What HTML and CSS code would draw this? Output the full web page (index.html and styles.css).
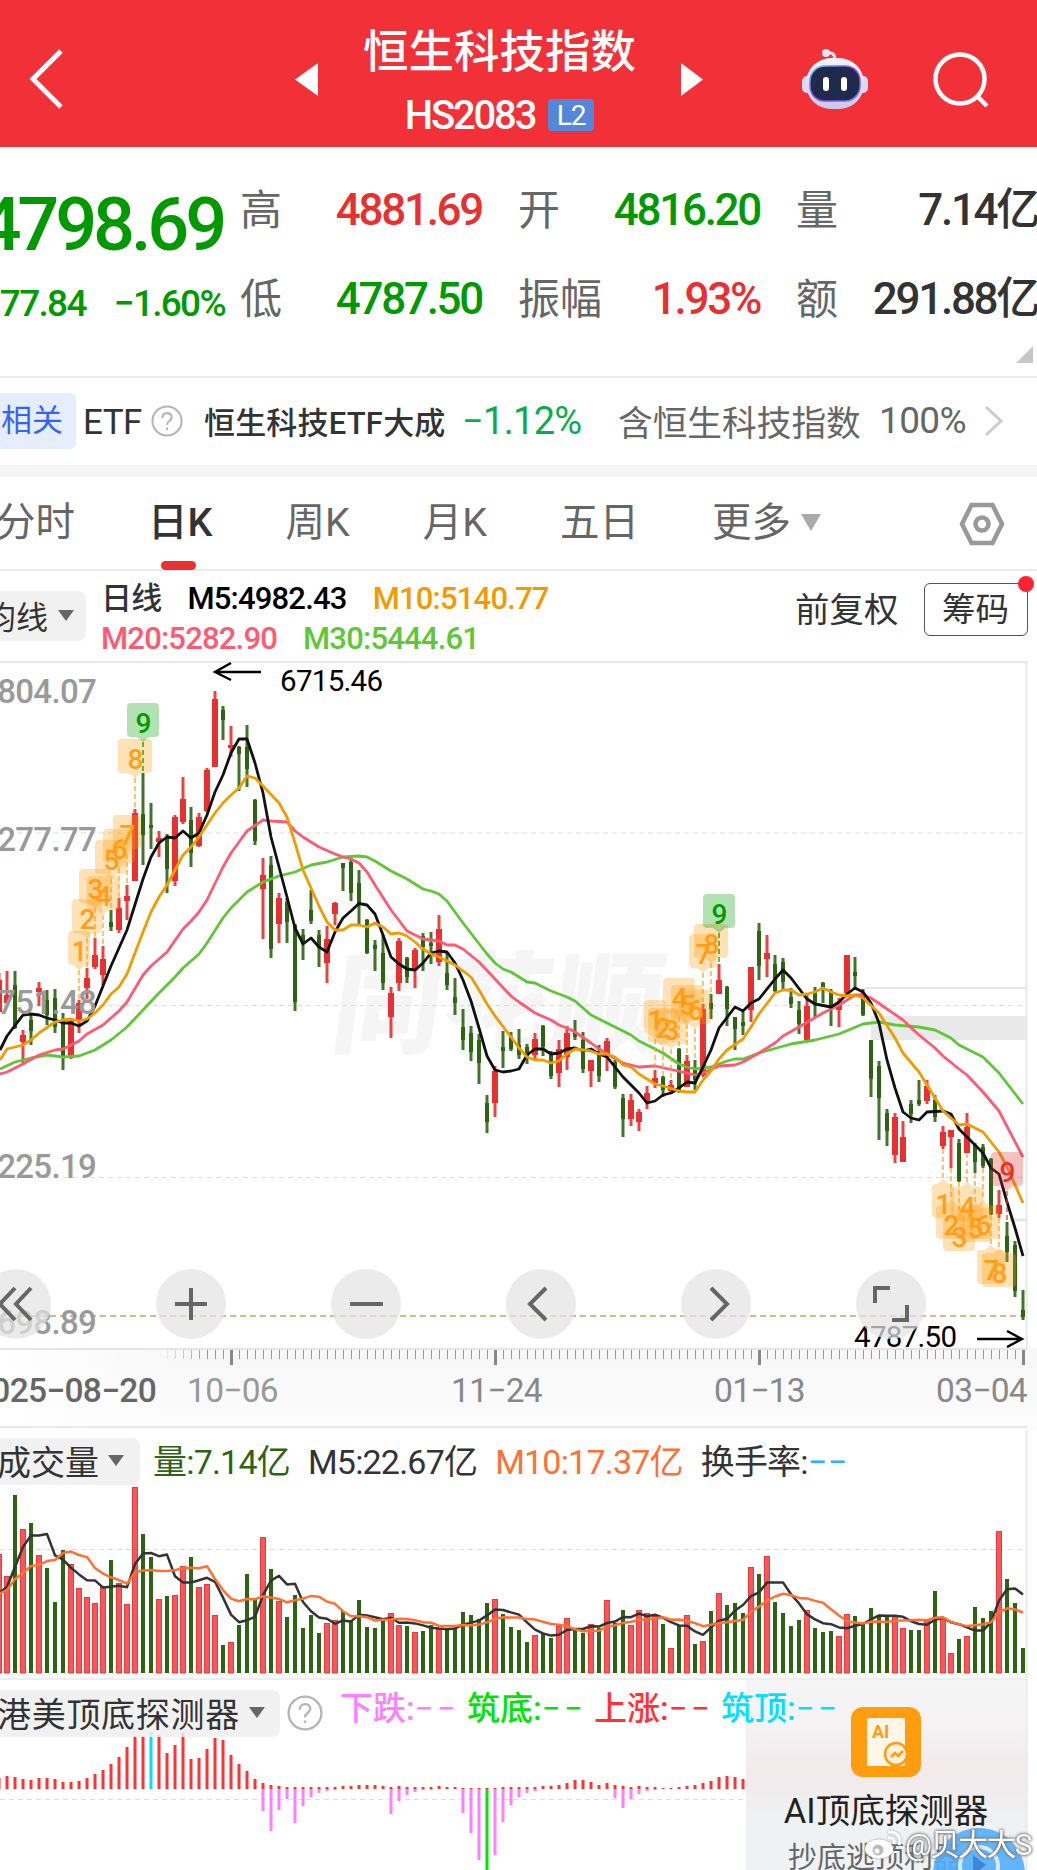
FILE: index.html
```html
<!DOCTYPE html>
<html lang="zh-CN">
<head>
    <meta charset="UTF-8">
    <title>恒生科技指数 HS2083</title>
    <link rel="stylesheet" href="styles.css">
</head>
<body>
    <header class="header">
        <svg class="back" width="36" height="62" viewBox="0 0 36 62"><path d="M33 3 5 31 33 59"/></svg>
        <svg class="prev" width="23" height="33" viewBox="0 0 23 33"><path d="M23 0v33L0 16.500z"/></svg>
        <div class="title">
            <h1>恒生科技指数</h1>
            <div class="code"><span>HS2083</span><span class="level">L2</span></div>
        </div>
        <svg class="next" width="22" height="33" viewBox="0 0 22 33"><path d="M0 0v33L22 16.500z"/></svg>
        <svg class="robot" width="66" height="62" viewBox="0 0 66 62">
            <defs>
                <linearGradient id="face" x1="0" y1="0" x2="1" y2="1">
                    <stop offset="0" stop-color="#5fd0e8"/><stop offset=".5" stop-color="#8a3be0"/><stop offset="1" stop-color="#6a7cf0"/>
                </linearGradient>
                <linearGradient id="shell" x1="0" y1="0" x2="0" y2="1">
                    <stop offset="0" stop-color="#f4f3fd"/><stop offset="1" stop-color="#c9c8ea"/>
                </linearGradient>
            </defs>
            <path d="M24 6q9-2 9 7" fill="none" stroke="#e6e4f8" stroke-width="3"/>
            <circle cx="24" cy="6" r="4" fill="#e6e4f8"/>
            <rect x="0" y="29" width="10" height="17" rx="5" fill="#dcdaf3"/>
            <rect x="56" y="29" width="10" height="17" rx="5" fill="#dcdaf3"/>
            <rect x="4" y="11" width="58" height="51" rx="25" fill="url(#shell)"/>
            <rect x="8" y="19" width="50" height="35" rx="15" fill="#1f2a4d" stroke="url(#face)" stroke-width="1.500"/>
            <rect x="21" y="30" width="6" height="14" rx="3" fill="#fff"/>
            <rect x="39" y="30" width="6" height="14" rx="3" fill="#fff"/>
        </svg>
        <svg class="search" width="56" height="56" viewBox="0 0 56 56"><circle cx="27" cy="27" r="24.500"/><path d="M44 44 54 54"/></svg>
    </header>

    <section class="quote">
        <div class="last">
            <div class="price">4798.69</div>
            <div class="change"><span>−77.84</span><span>−1.60%</span></div>
        </div>
        <dl class="stats">
            <div><dt>高</dt><dd class="up">4881.69</dd></div>
            <div><dt>开</dt><dd class="down">4816.20</dd></div>
            <div><dt>量</dt><dd>7.14亿</dd></div>
            <div><dt>低</dt><dd class="down">4787.50</dd></div>
            <div><dt>振幅</dt><dd class="up">1.93%</dd></div>
            <div><dt>额</dt><dd>291.88亿</dd></div>
        </dl>
        <i class="corner"></i>
    </section>

    <section class="related">
        <span class="tag">相关</span>
        <span class="etf">ETF</span>
        <svg class="help" width="32" height="32" viewBox="0 0 34 34"><circle cx="17" cy="17" r="15.500"/><path d="M12 14c0-7 10-7 10-1 0 4-5 4-5 8M17 24v2.500"/></svg>
        <span class="etf-name">恒生科技ETF大成</span>
        <span class="etf-change">−1.12%</span>
        <span class="etf-hold">含恒生科技指数</span>
        <span class="etf-pct">100%</span>
        <svg class="more" width="20" height="32" viewBox="0 0 20 32"><path d="M2 2 17 16 2 30"/></svg>
    </section>

    <nav class="tabs">
        <span>分时</span>
        <span class="active">日K</span>
        <span>周K</span>
        <span>月K</span>
        <span>五日</span>
        <span>更多<i class="caret"></i></span>
        <svg class="setting" width="46" height="44" viewBox="0 0 46 44"><path d="M12.500 3h21L43 22l-9.500 19h-21L3 22z"/><circle cx="23" cy="22" r="6.500"/></svg>
    </nav>

    <section class="ma">
        <span class="pill ma-pill">均线<i class="caret"></i></span>
        <div class="ma-values">
            <p><span>日线</span><span class="m5">M5:4982.43</span><span class="m10">M10:5140.77</span></p>
            <p><span class="m20">M20:5282.90</span><span class="m30">M30:5444.61</span></p>
        </div>
        <span class="adjust">前复权</span>
        <span class="chips">筹码</span>
    </section>

    <section class="kline">
        <svg id="kline" width="1037" height="688" viewBox="0 0 1037 688"></svg>
        <div class="controls">
            <span><svg viewBox="0 0 70 70"><path d="M34 19 19 35 34 51M50 19 35 35 50 51"/></svg></span>
            <span><svg viewBox="0 0 70 70"><path d="M35 19v32M19 35h32"/></svg></span>
            <span><svg viewBox="0 0 70 70"><path d="M19 35h33"/></svg></span>
            <span><svg viewBox="0 0 70 70"><path d="M40 19 24 35 40 51"/></svg></span>
            <span><svg viewBox="0 0 70 70"><path d="M30 19 46 35 30 51"/></svg></span>
            <span><svg viewBox="0 0 70 70"><path d="M19 34V19h15M51 36v15H36"/></svg></span>
        </div>
    </section>

    <section class="axis">
        <svg id="axis" width="1037" height="82" viewBox="0 0 1037 82"></svg>
    </section>

    <section class="volume">
        <svg id="volume" width="1037" height="250" viewBox="0 0 1037 250"></svg>
        <div class="sub-head">
            <span class="pill">成交量<i class="caret"></i></span>
            <div class="vol-values">
                <span class="vol">量:7.14亿</span>
                <span>M5:22.67亿</span>
                <span class="vol-m10">M10:17.37亿</span>
                <span>换手率:<b>−−</b></span>
            </div>
        </div>
    </section>

    <section class="probe">
        <svg id="probe" width="1037" height="190" viewBox="0 0 1037 190"></svg>
        <div class="ai-card">
            <svg width="70" height="70" viewBox="0 0 70 70">
                <rect width="70" height="70" rx="12" fill="#ff9d0e"/>
                <rect x="16" y="11" width="38" height="48" rx="2" fill="#fff6ea"/>
                <text x="21" y="31" font-size="18" font-weight="700" fill="#ff9d0e">AI</text>
                <circle cx="45" cy="47" r="11" fill="#fff1df" stroke="#ff9d0e" stroke-width="2.500"/>
                <path d="M40 50l4-4 3 3 5-5" fill="none" stroke="#ff9d0e" stroke-width="2.500"/>
            </svg>
            <h2>AI顶底探测器</h2>
            <p>抄底逃顶利器</p>
        </div>
        <div class="sub-head">
            <span class="pill probe-pill">港美顶底探测器<i class="caret"></i></span>
            <svg class="help" width="36" height="36" viewBox="0 0 34 34"><circle cx="17" cy="17" r="15.500"/><path d="M12 14c0-7 10-7 10-1 0 4-5 4-5 8M17 24v2.500"/></svg>
            <div class="legend">
                <span class="fall">下跌:<b>−−</b></span>
                <span class="bottom">筑底:<b>−−</b></span>
                <span class="rise">上涨:<b>−−</b></span>
                <span class="top">筑顶:<b>−−</b></span>
            </div>
        </div>
        <div class="float-ball"><svg viewBox="0 0 92 92"><circle cx="46" cy="38" r="19"/><path d="M40 27v20l13-10z"/></svg></div>
        <div class="mark">
            <svg width="38" height="30" viewBox="0 0 38 30"><ellipse cx="15" cy="19" rx="14" ry="9.500"/><circle cx="14" cy="20" r="5.500" fill="#bbb"/><circle cx="13" cy="21" r="2.500"/><path class="wave" d="M24 8c5-1 7 2 6 6M24 2c9-1 14 6 11 13"/></svg>
            <span>@贝大大S</span>
        </div>
    </section>

    <script src="chart.js"></script>
</body>
</html>
```
FILE: styles.css
```css
* {
    box-sizing: border-box;
}
body {
    margin: 0;
    width: 1037px;
    height: 1870px;
    overflow: hidden;
    background: #fff;
    color: #333;
    font-family: Roboto, "Noto Sans CJK SC", sans-serif;
}
h1, h2, p, dl, dd {
    margin: 0;
    font-weight: 400;
}
span, dt, dd, h1, h2, p {
    white-space: nowrap;
}
svg {
    display: block;
    flex: none;
}

/* header */
.header {
    display: flex;
    align-items: center;
    height: 147px;
    padding-top: 12px;
    background: #f23038;
    color: #fff;
}
.back {
    margin-left: 28px;
    margin-top: -2px;
    fill: none;
    stroke: #fff;
    stroke-width: 5;
}
.prev, .next {
    fill: #fff;
}
.prev {
    margin-left: 231px;
}
.title {
    width: 363px;
    align-self: flex-start;
    margin-top: 11px;
    text-align: center;
}
.title h1 {
    font-size: 45.500px;
    line-height: 60px;
    font-weight: 500;
}
.code {
    display: flex;
    justify-content: center;
    align-items: center;
    gap: 13px;
    height: 40px;
    margin-top: 12px;
    font-size: 40px;
    font-weight: 500;
    letter-spacing: -2.200px;
}
.level {
    width: 46px;
    height: 32px;
    border-radius: 4px;
    background: #5487da;
    font-size: 28px;
    font-weight: 400;
    line-height: 33px;
    letter-spacing: -1px;
}
.robot {
    margin-left: 99px;
    margin-top: -4px;
}
.search {
    margin-left: 65px;
    fill: none;
    stroke: #fff;
    stroke-width: 4.500;
}

/* quote */
.quote {
    position: relative;
    display: flex;
    height: 231px;
    border-bottom: 2px solid #ebebeb;
}
.last {
    width: 225px;
    margin-right: 15px;
    display: flex;
    flex-direction: column;
    align-items: flex-end;
    padding-top: 36px;
    color: #009a00;
}
.price {
    font-size: 74px;
    line-height: 84px;
    font-weight: 500;
    letter-spacing: -4.200px;
    margin-right: 2px;
}
.change {
    display: flex;
    gap: 28px;
    margin-top: 17px;
    font-size: 37px;
    line-height: 40px;
    font-weight: 500;
    letter-spacing: -1.700px;
    margin-right: 0;
}
.stats {
    width: 797px;
    display: grid;
    grid-template-columns: repeat(3, 1fr);
    column-gap: 37px;
    align-content: start;
    padding-top: 28px;
}
.stats div {
    display: flex;
    justify-content: space-between;
    align-items: baseline;
    height: 89px;
    line-height: 70px;
}
.stats dt {
    font-size: 42px;
    color: #666;
}
.stats dd {
    font-size: 44px;
    font-weight: 500;
    letter-spacing: -2.300px;
    margin-right: -1px;
}
.stats .up {
    color: #e7302f;
}
.stats .down {
    color: #009a00;
}
.corner {
    position: absolute;
    right: 4px;
    bottom: 13px;
    border-left: 17px solid transparent;
    border-bottom: 17px solid #c6c6c6;
}

/* related ETF */
.related {
    display: flex;
    align-items: center;
    height: 99px;
    padding-bottom: 2px;
    border-bottom: 12px solid #f4f4f4;
}
.tag {
    width: 76px;
    height: 56px;
    padding-left: 1px;
    border-radius: 0 6px 6px 0;
    background: #e6edff;
    color: #3564f5;
    font-size: 31px;
    line-height: 56px;
}
.etf {
    margin-left: 7px;
    padding-top: 3px;
    font-size: 35px;
    letter-spacing: -.5px;
}
.help {
    fill: none;
    stroke: #b5b5b5;
    stroke-width: 2.200;
}
.related .help {
    margin-left: 9px;
}
.etf-name {
    width: 240px;
    margin-left: 21px;
    font-size: 31px;
    letter-spacing: .2px;
    font-weight: 500;
}
.etf-change {
    width: 121px;
    margin-left: 18px;
    font-size: 38px;
    letter-spacing: -.7px;
    color: #0aab50;
}
.etf-hold {
    width: 244px;
    margin-left: 35px;
    font-size: 34.700px;
    color: #666;
}
.etf-pct {
    margin-left: 17px;
    font-size: 37px;
    letter-spacing: -.6px;
    color: #666;
}
.more {
    margin-left: 18px;
    fill: none;
    stroke: #ccc;
    stroke-width: 3;
}

/* tabs */
.tabs {
    position: relative;
    display: flex;
    align-items: center;
    gap: 73px;
    height: 94px;
    margin-left: -4px;
    border-bottom: 2px solid #ebebeb;
    font-size: 39.500px;
    color: #666;
}
.tabs span {
    position: relative;
    line-height: 96px;
}
.tabs .active {
    color: #333;
    font-weight: 500;
}
.tabs .active::after {
    content: "";
    position: absolute;
    left: 13px;
    bottom: 1px;
    width: 35px;
    height: 9px;
    border-radius: 5px;
    background: #e7302f;
}
.caret {
    display: inline-block;
    border: 8px solid transparent;
    border-top: 11px solid #666;
    border-bottom: 0;
}
.tabs .caret {
    margin-left: 10px;
    vertical-align: 5px;
    border-width: 17px 10.500px 0;
    border-top-color: #aaa;
}
.setting {
    margin-left: auto;
    margin-right: 32px;
    margin-top: 2px;
    fill: none;
    stroke: #999;
    stroke-width: 4.500;
}

/* moving averages */
.ma {
    display: flex;
    height: 89px;
}
.pill {
    display: flex;
    align-items: center;
    height: 47px;
    padding-bottom: 2px;
    border-radius: 0 8px 8px 0;
    background: #f1f1f1;
    font-size: 34px;
}
.ma-pill {
    width: 86px;
    height: 50px;
    margin-top: 20px;
    font-size: 32px;
    text-indent: -16px;
}
.ma-pill .caret {
    margin-left: 10px;
}
.ma-values {
    width: 694px;
    margin-left: 15px;
    padding-top: 8px;
    font-size: 31px;
    font-weight: 500;
    letter-spacing: -.8px;
}
.ma-values p {
    display: flex;
    gap: 26px;
    line-height: 39.500px;
    height: 39.500px;
    font-weight: inherit;
}
.m5 {
    color: #000;
}
.m10 {
    color: #f09c00;
}
.m20 {
    color: #ff5a74;
}
.m30 {
    color: #5fc736;
}
.adjust {
    margin-top: 14px;
    font-size: 34.500px;
    line-height: 50px;
}
.chips {
    position: relative;
    width: 104px;
    height: 53px;
    margin-left: 25px;
    margin-top: 12px;
    border: 1.500px solid #555;
    border-radius: 6px;
    text-align: center;
    font-size: 33.500px;
    line-height: 52px;
}
.chips::after {
    content: "";
    position: absolute;
    right: -7px;
    top: -8px;
    width: 16px;
    height: 16px;
    border-radius: 50%;
    background: #ff2233;
}

/* charts */
.kline {
    position: relative;
    height: 688px;
}
.kline text, .axis text {
    letter-spacing: -.7px;
}
.controls {
    position: absolute;
    left: -19px;
    top: 609px;
    display: flex;
    gap: 105px;
}
.controls span {
    width: 70px;
    height: 70px;
    border-radius: 50%;
    background: rgba(227, 227, 227, .72);
}
.controls path {
    fill: none;
    stroke: #666;
    stroke-width: 4;
}
.axis {
    height: 82px;
    background: linear-gradient(90deg, #fff 0, rgba(255, 255, 255, 0) 180px), linear-gradient(#f7f7f7, #fcfcfc);
}
.volume, .probe {
    position: relative;
}
.volume {
    height: 250px;
}
.probe {
    height: 190px;
}
#volume, #probe {
    position: absolute;
    left: 0;
    top: 0;
}
.sub-head {
    position: relative;
    display: flex;
    font-size: 33px;
}
.volume .sub-head {
    padding-top: 8px;
}
.volume .pill {
    width: 140px;
    text-indent: -3px;
}
.volume .caret {
    margin-left: 9px;
}
.vol-values {
    display: flex;
    gap: 18px;
    margin-left: 13px;
    line-height: 48px;
    font-size: 34px;
    letter-spacing: -.8px;
}
.vol-values b {
    font-weight: 400;
    color: #2fb0ff;
    letter-spacing: .5px;
}
.vol {
    color: #2c6412;
}
.vol-m10 {
    color: #ff7033;
}
.probe .sub-head {
    padding-top: 10px;
}
.probe-pill {
    width: 280px;
    letter-spacing: .7px;
    text-indent: -3px;
    background: rgba(238, 238, 238, .85);
}
.probe-pill .caret {
    margin-left: 9px;
}
.probe .help {
    margin: 5px 0 0 7px;
}
.legend {
    display: flex;
    margin-left: 17px;
    line-height: 38px;
}
.legend span {
    width: 127px;
    font-weight: 500;
}
.legend b {
    font-weight: 400;
    letter-spacing: 3.500px;
}
.fall {
    color: #ff80ff;
}
.bottom {
    color: #00e600;
}
.rise {
    color: #ff3333;
}
.top {
    color: #00e0ff;
}
.ai-card {
    position: absolute;
    left: 746px;
    top: 0;
    width: 280px;
    height: 190px;
    display: flex;
    flex-direction: column;
    align-items: center;
    padding-top: 27px;
    background: linear-gradient(#f5f5f5 0, #f4f2f3 25%, #f2e9eb 48%, #eff1f2 72%, #eef2f4 100%);
}
.ai-card h2 {
    margin-top: 12px;
    font-size: 34.500px;
    line-height: 44px;
    color: #222;
}
.ai-card p {
    margin-top: 4px;
    margin-left: -22px;
    font-size: 29px;
    line-height: 42px;
    color: #666;
}
.float-ball {
    position: absolute;
    left: 933px;
    top: 148px;
    width: 92px;
    height: 42px;
    overflow: hidden;
}
.float-ball svg {
    width: 92px;
    height: 92px;
    border-radius: 50%;
    background: rgba(82, 174, 252, .9);
}
.float-ball circle {
    fill: none;
    stroke: #d5ecff;
    stroke-width: 4;
}
.float-ball path {
    fill: #3a88d8;
}
.mark {
    position: absolute;
    left: 864px;
    top: 148px;
    display: flex;
    align-items: center;
    gap: 3px;
    color: #fff;
    fill: #fff;
    font-size: 30px;
    line-height: 34px;
    letter-spacing: -1.800px;
    text-shadow: 0 0 3px #555;
    filter: drop-shadow(0 0 1px #999);
}
.mark .wave {
    fill: none;
    stroke: #fff;
    stroke-width: 3;
}
```
FILE: chart.js
```js
// colour, high, body top, body bottom, low (px from the top of the chart)
const candles = `R313,320,352,352 R311,335,343,344 G311,325,368,369 R370,375,382,405 G353,360,371,385 R322,328,332,346 G330,340,355,365 G329,338,367,373
G353,360,397,410 R360,361,398,399 R340,343,360,373 R308,318,328,339 R278,295,307,309 R286,299,315,325 G250,262,267,271 R238,248,270,273
R225,236,241,260 R149,153,221,221 G113,154,175,205 G143,165,168,189 R171,178,182,197 G174,177,209,233 R155,157,221,226 R117,139,162,164
G147,160,193,207 R153,157,186,187 R108,110,151,152 R31,39,107,107 G46,50,60,80 R66,85,88,97 G86,87,94,131 G65,87,109,127
G139,140,181,185 R198,215,229,279 G196,205,289,298 R233,238,264,283 G238,242,262,283 G264,265,342,351 G269,275,284,300 G230,250,261,264
G270,275,288,307 R266,279,303,323 R242,243,254,265 G203,203,208,231 G200,202,233,241 G210,223,244,266 G259,260,293,294 G280,285,289,311
G275,293,323,330 R327,333,357,378 R278,281,323,331 G297,298,317,323 R288,290,310,328 G273,276,287,311 G272,283,286,304 R255,269,302,306
G293,313,325,330 G318,337,343,355 G349,367,380,390 G366,373,392,401 G374,380,403,424 G435,443,462,473 R406,411,443,457 G371,387,391,408
G372,377,389,391 G369,385,395,399 G384,387,398,404 R373,379,395,400 G365,366,387,396 G391,395,416,419 R380,389,413,427 R366,373,397,410
G360,372,377,380 G372,380,409,413 R400,400,411,427 G385,395,416,422 R378,381,396,411 G400,402,427,429 G434,438,459,477 R434,440,459,466
R449,452,462,471 R426,433,442,449 R410,418,423,428 G416,417,430,437 R420,425,431,432 G388,389,430,433 R395,401,427,427 G400,410,420,430
R344,349,415,417 G334,343,349,359 R304,320,334,334 G326,327,349,366 G357,357,369,390 G352,362,366,375 R307,307,350,362 G263,271,306,320
R275,293,299,317 G295,304,331,332 G298,302,322,331 G328,337,344,348 G341,350,364,374 R335,346,380,380 G327,332,343,357 G322,323,330,343
G329,333,349,366 R338,344,350,367 R295,295,333,334 G297,312,316,328 G329,333,355,356 G380,380,419,437 G401,406,438,480 G449,453,471,486
R453,457,495,503 R461,477,502,502 G440,444,454,463 G420,440,444,446 R420,426,441,444 G435,440,457,462 R466,472,486,489 R470,470,477,508
G479,483,521,522 R453,467,493,493 G483,485,502,513 G484,487,506,508 G498,499,554,555 R530,545,554,558 G562,576,592,602 G581,585,631,637
G630,650,657,660`.split(/\s+/).map(s => [s[0], ...s.slice(1).split(',').map(Number)]);

const averages = {
    '#5fc736': '0,409 15,402 31,398 47,395 63,397 79,396 95,390 111,380 127,367 143,350 159,333 175,317 183,308 199,294 207,283 223,258 231,248 247,232 263,222 279,216 295,212 311,205 327,202 343,197 359,196 367,197 375,201 391,211 407,219 423,229 431,231 439,234 447,241 463,263 487,294 495,303 503,309 511,312 527,322 535,323 551,331 567,337 575,341 591,355 599,359 607,363 631,375 639,381 663,393 679,404 687,407 695,409 711,407 727,401 735,399 743,399 759,393 791,384 815,380 839,374 863,364 879,362 895,365 919,367 935,370 951,378 959,385 983,397 999,413 1023,444',
    '#ff5a74': '0,414 7,412 23,404 39,395 55,390 63,389 79,381 87,374 103,365 119,351 127,342 143,315 151,306 167,292 183,269 191,261 199,252 207,240 223,207 231,193 239,182 247,171 263,160 271,161 287,162 295,171 303,177 319,187 335,194 343,197 351,199 359,203 367,212 375,225 391,250 407,271 423,279 439,281 447,285 455,285 463,289 479,302 495,319 511,336 519,342 535,353 551,360 559,365 567,368 575,372 591,383 599,389 607,394 623,403 639,407 655,406 687,413 695,415 703,413 719,406 735,405 743,402 759,393 775,383 783,376 799,367 823,353 839,345 855,335 863,335 871,338 903,360 919,375 935,388 943,396 959,409 967,415 983,432 999,451 1023,497',
    '#111': '0,390 7,376 23,355 31,354 39,355 47,358 55,360 63,363 71,363 79,366 87,361 95,346 111,306 127,270 143,219 151,197 159,183 167,177 175,178 183,171 191,178 199,173 207,155 215,132 223,115 231,93 239,79 247,79 255,103 263,133 271,177 279,207 287,237 295,268 303,284 311,278 319,287 327,292 335,272 343,258 351,251 359,243.5 367,245 375,254 383,275 391,297 399,304 407,309 415,310 423,303 431,293 439,291 447,292 455,303 463,320 471,341 479,368 487,396 495,410 503,412 511,411 519,409 527,395 535,389 543,389 551,394 559,393 567,389 575,388 583,391 591,389 599,394 607,397 623,417 639,433 647,443 655,441 663,435 671,433 679,428 687,422 695,423 703,407 711,390 719,368 735,347 743,351 751,343 759,339 775,319 783,310 791,318 807,339 815,344 831,347 839,342 847,334 855,328 863,332 871,343 879,363 887,400 895,428 903,452 911,458 919,460 927,452 943,451 951,454 959,469 975,485 983,493 991,508 999,514 1007,542 1015,568 1023,596',
    '#f09c00': '0,400 7,389 23,385 31,380 39,373 55,362 63,360 71,359 79,361 87,359 95,353 103,345 111,334 119,327 127,314 135,293 143,272 151,252 159,237 167,225 175,210 183,195 191,187 199,177 207,165 215,153 223,143 231,135 239,128 247,116 255,118 263,126 279,143 287,157 295,183 303,210 311,228 319,246 327,262 335,270 343,270 351,265 359,265 367,267 375,263 383,267 391,274 399,273 407,276 415,282 423,289 431,294 439,297 447,301 455,305 471,317 479,330 487,344 495,356 511,377 519,388 527,397 535,400 543,400 551,403 559,401 567,394 575,389 591,391 599,394 607,394 615,397 623,405 631,407 639,414 655,424 663,426 679,431 687,432 695,432 703,420 711,411 719,399 727,390 743,379 751,367 759,354 775,333 783,330 791,330 799,335 807,334 815,332 823,328 831,332 839,335 847,336 855,335 863,338 879,353 895,378 903,393 919,412 927,425 943,451 959,465 967,464 975,468 983,472 999,492 1007,507 1023,543'
};

// number, candle index, top of the box, width, up = box hangs below the candle
const signals = [
    [1, 10, 271, 22], [2, 11, 239, 30], [3, 12, 209, 32], [4, 13, 216, 32], [5, 14, 180, 32], [6, 15, 169, 32], [7, 16, 155, 28], [8, 17, 79, 34], [9, 18, 43, 32, '', 'g'],
    [1, 82, 340, 22], [2, 83, 348, 30], [3, 84, 350, 32], [4, 85, 318, 32], [5, 86, 325, 32], [6, 87, 330, 32], [7, 88, 274, 28], [8, 89, 264, 34], [9, 90, 234, 32, '', 'g'],
    [1, 118, 524, 22, 'up'], [2, 119, 545, 30, 'up'], [3, 120, 557, 32, 'up'], [4, 121, 527, 32, 'up'], [5, 122, 548, 32, 'up'], [6, 123, 545, 32, 'up'], [7, 124, 590, 28, 'up'], [8, 125, 593, 34, 'up'], [9, 126, 492, 32, '', 'r']
];

const volumes = [124, 146, 65, 99, 93, 125, 138, 172, 120, 134, 158, 167, 173, 156, 130, 153, 174, 57, 104, 127, 169, 166, 165, 136, 127, 157, 154, 185, 215, 212, 195, 144,
    168, 107, 139, 171, 187, 165, 198, 185, 203, 193, 190, 181, 190, 170, 197, 198, 191, 183, 195, 196, 202, 201, 195, 199, 199, 198, 182, 185, 189, 173, 169, 184,
    197, 200, 212, 205, 203, 208, 196, 188, 200, 203, 194, 198, 170, 193, 180, 195, 180, 183, 186, 194, 218, 196, 185, 214, 211, 181, 163, 175, 173, 183, 137, 144,
    126, 172, 183, 196, 190, 180, 198, 202, 201, 206, 184, 186, 193, 178, 186, 186, 186, 198, 200, 200, 190, 161, 188, 223, 209, 206, 177, 188, 181, 101, 149, 173, 218];

const rises = [98, 96, 97, 99, 100, 98, 98, 99, 102, 102, 101, 98, 94, 90, 84, 77, 67, 56, 56, 52, 55, 73, 65, 53, 79, 78, 69, 58, 60, 75, 84, 91, 99, 103, 105, 106, 107, 107, 107, 107, 107, 107, 107,
    106, 106, 105, 105, 105, 106, 107, 106, 107, 107, 107, 107, 106, 107, 107, 108, 108, 108, 108, 108, 107, 107, 107, 107, 107, 106, 106, 105, 103, 100, 100, 102, 105, 103, 105, 106, 107, 106, 107, 107, 108, 108, 107, 106, 105, 103, 101, 97, 96, 97, 99];
const falls = {33: 131, 34: 151, 35: 130, 36: 119, 37: 143, 38: 126, 39: 117, 40: 113, 41: 111, 42: 110, 49: 134, 50: 121, 51: 115, 52: 112, 53: 110, 54: 110, 58: 133, 59: 153, 60: 180, 61: 190, 62: 175, 63: 142, 64: 125, 65: 117, 66: 113, 67: 111, 77: 118, 78: 128, 79: 119, 80: 114, 81: 111, 82: 110};

const X = i => i * 8 - 1;
const rect = (x, y, w, h, fill, extra = '') => `<rect x="${x}" y="${y}" width="${w}" height="${h}" fill="${fill}" ${extra}/>`;
const line = (x1, y1, x2, y2, color, w = 2, extra = '') => `<path d="M${x1} ${y1}L${x2} ${y2}" stroke="${color}" stroke-width="${w}" fill="none" ${extra}/>`;
const poly = (points, color, w = 2.8) => `<polyline points="${points}" fill="none" stroke="${color}" stroke-width="${w}" stroke-linejoin="round"/>`;
const text = (x, y, s, size, color, extra = '') => `<text x="${x}" y="${y}" font-size="${size}" fill="${color}" ${extra}>${s}</text>`;

function drawKline() {
    let s = line(0, 2, 1027, 2, '#e8e8e8') + line(1026.5, 1, 1026.5, 688, '#e8e8e8');
    s += `<text transform="translate(328 384) skewX(-8)" font-size="110" font-weight="900" fill="#f5f5f5" style="letter-spacing:0">同花顺</text>`;
    [173, 345.5, 517.5].forEach(y => s += line(0, y, 1026, y, '#ddd', 1.2, 'stroke-dasharray="5 4"'));
    s += line(865, 328, 1026, 328, '#e6e6e6') + rect(871, 356, 155, 24, '#e9e9e9') + line(1010, 560, 1026, 560, '#e6e6e6', 3);
    s += line(0, 656, 1023, 656, '#c9a263', 1.6, 'stroke-dasharray="6 4"');
    candles.forEach(([c, h, t, b, l], i) => {
        const color = c === 'R' ? '#e7302f' : '#2c6412';
        const w = c === 'R' ? 6 : 4;
        s += rect(X(i) - 1.5, h, 3, Math.max(l - h, 1), color, 'opacity=".9"') + rect(X(i) - w / 2, t, w, Math.max(b - t, 2), color);
    });
    for (const color in averages) s += poly(averages[color], color);
    ['6804.07', '6277.77', '5751.48', '5225.19', '4698.89'].forEach((v, i) =>
        s += text(96, [43, 191, 354, 518, 674][i], v, 33, '#999', 'text-anchor="end" font-weight="500"'));
    signals.forEach(([n, i, top, w, up, kind]) => {
        const color = kind === 'g' ? '#009a00' : kind === 'r' ? '#e7302f' : '#ff9f1a';
        const fill = kind === 'g' ? '#009a00' : kind === 'r' ? '#e7302f' : '#ff9d0e';
        const x = X(i);
        const y1 = up ? candles[i][4] : top + 39;
        const y2 = up ? top - 5 : candles[i][1];
        if (y2 > y1) s += line(x, y1, x, y2, color, 1.8, 'stroke-dasharray="5 3" opacity=".7"');
        s += rect(x - w / 2, top, w, 34, fill, 'rx="4" opacity=".3"');
        s += `<path d="${up ? `M${x - 6} ${top}l6-5 6 5z` : `M${x - 6} ${top + 34}l6 5 6-5z`}" fill="${fill}" opacity=".3"/>`;
        s += text(x, top + 29.5, n, 28, color, 'text-anchor="middle" font-weight="500"');
    });
    s += text(280, 31, '6715.46', 29.5, '#000') + `<path d="M261 12H216M231 3l-16 9 16 8" fill="none" stroke="#000" stroke-width="2.4"/>`;
    s += text(854, 687, '4787.50', 29.5, '#000') + `<path d="M977 679h44M1007 671l15 8-15 8" fill="none" stroke="#000" stroke-width="2.4"/>`;
    document.getElementById('kline').innerHTML = s;
}

function drawAxis() {
    let s = line(0, 1, 1027, 1, '#e4e4e4') + line(0, 79, 1027, 79, '#e8e8e8');
    for (let i = 21; i < 129; i++) {
        s += line(X(i) + .5, 2, X(i) + .5, 11, '#999', 1, `opacity="${Math.min(1, (i - 20) / 6)}"`);
    }
    [231, 495, 759, 1023].forEach(x => s += line(x + .5, 2, x + .5, 17, '#888', 3));
    s += text(156, 54, '2025−08−20', 33.5, '#666', 'text-anchor="end" font-weight="500"');
    s += text(187, 54, '10−06', 33.5, '#999') + text(451, 54, '11−24', 33.5, '#888') + text(714, 54, '01−13', 33.5, '#888');
    s += text(1027, 54, '03−04', 33.5, '#888', 'text-anchor="end"');
    document.getElementById('axis').innerHTML = s;
}

// lead holds the averages of the first bars, whose history lies off screen
function movingAverage(n, lead) {
    return volumes.map((v, i) => {
        const y = i < n - 1 ? lead[i] : volumes.slice(i - n + 1, i + 1).reduce((a, b) => a + b) / n;
        return X(i) + ',' + y;
    }).join(' ');
}

function drawVolume() {
    let s = line(0, 119.5, 1026, 119.5, '#ddd', 1.2, 'stroke-dasharray="5 4"') + line(0, 242, 1026, 242, '#e8e8e8') + line(0, 249, 1026, 249, '#e8e8e8', 1.5) + line(1026.5, 0, 1026.5, 250, '#e8e8e8');
    volumes.forEach((y, i) => {
        s += candles[i][0] === 'R'
            ? rect(X(i) - 2.5, y + .5, 5, 242.5 - y, '#f4585a', 'stroke="#e93a3c"')
            : rect(X(i) - 2, y, 4, 243 - y, '#2c6412');
    });
    s += poly(movingAverage(5, [163, 157, 137, 117]), '#333', 2.5) + poly(movingAverage(10, [164, 160, 149, 143, 136, 135, 131, 130, 123]), '#ff7033', 2.5);
    document.getElementById('volume').innerHTML = s;
}

function drawProbe() {
    let s = line(0, 119.5, 746, 119.5, '#ddd', 1.2, 'stroke-dasharray="5 4"') + line(1026.5, 0, 1026.5, 190, '#e8e8e8');
    rises.forEach((y, i) => s += rect(X(i) - 1.5, y, 3, 109 - y, i === 19 ? '#00e0ff' : '#ff3333'));
    for (const i in falls) s += rect(X(i) - 1.5, 109, 3, falls[i] - 109, i === '61' ? '#00e600' : '#ff80ff');
    document.getElementById('probe').innerHTML = s;
}

drawKline();
drawAxis();
drawVolume();
drawProbe();
```
